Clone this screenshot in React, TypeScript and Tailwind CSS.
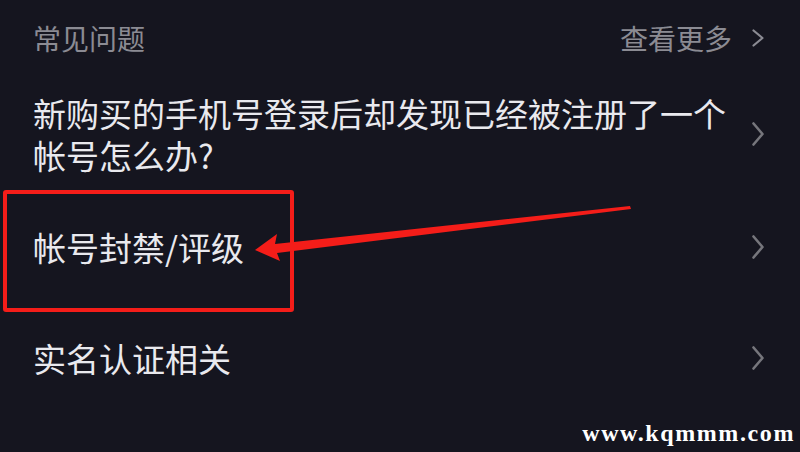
import React from "react";

function Chevron({ className }: { className?: string }) {
  return (
    <svg viewBox="0 0 12 24" className={className} fill="none" stroke="currentColor" strokeWidth={2.6} strokeLinecap="round" strokeLinejoin="round">
      <path d="M1.5 1.5 L10.5 12 L1.5 22.5" />
    </svg>
  );
}

function SmallChevron({ className }: { className?: string }) {
  return (
    <svg viewBox="0 0 12 18" className={className} fill="none" stroke="currentColor" strokeWidth={2.2} strokeLinecap="round" strokeLinejoin="round">
      <path d="M1.5 1.5 L10.5 9 L1.5 16.5" />
    </svg>
  );
}

const cjk = { fontFamily: '"Noto Sans CJK SC", "Noto Sans", sans-serif' };

function Row({ h, children }: { h: string; children: React.ReactNode }) {
  return (
    <div className={`flex items-center justify-between pl-[33px] pr-[36px] ${h}`}>
      <div className="text-[33px] leading-[42px] text-[#e9e9ee]">{children}</div>
      <Chevron className="w-[12px] h-[24px] text-[#76767c] shrink-0" />
    </div>
  );
}

export default function App() {
  return (
    <div className="relative w-[800px] h-[452px] overflow-hidden bg-[#15151f]" style={cjk}>
      <div className="flex items-center justify-between h-[76px] pl-[33px] pr-[36px]">
        <span className="text-[28px] leading-none text-[#8b8b93]">常见问题</span>
        <div className="flex items-center gap-[20px]">
          <span className="text-[28px] leading-none text-[#8b8b93]">查看更多</span>
          <SmallChevron className="w-[12px] h-[18px] text-[#8b8b93]" />
        </div>
      </div>

      <Row h="h-[116px]">
        <div>新购买的手机号登录后却发现已经被注册了一个</div>
        <div>帐号怎么办?</div>
      </Row>
      <Row h="h-[110px]">帐号封禁/评级</Row>
      <Row h="h-[112px]">实名认证相关</Row>

      {/* highlight box */}
      <div className="absolute left-[3px] top-[190px] w-[291px] h-[122px] border-[4px] border-[#f41d19] rounded-[3px]" />

      {/* pointer arrow */}
      <svg className="absolute left-0 top-0 pointer-events-none" width="800" height="452" viewBox="0 0 800 452">
        <polygon
          fill="#f41d19"
          points="255,250 277,234 275,244 630,206 631,209 277,253 280,261"
        />
      </svg>

      <div
        className="absolute right-[5px] bottom-[7px] text-[24px] leading-none font-bold text-white tracking-[1.6px]"
        style={{ fontFamily: '"Liberation Serif", serif' }}
      >
        www.kqmmm.com
      </div>
    </div>
  );
}
